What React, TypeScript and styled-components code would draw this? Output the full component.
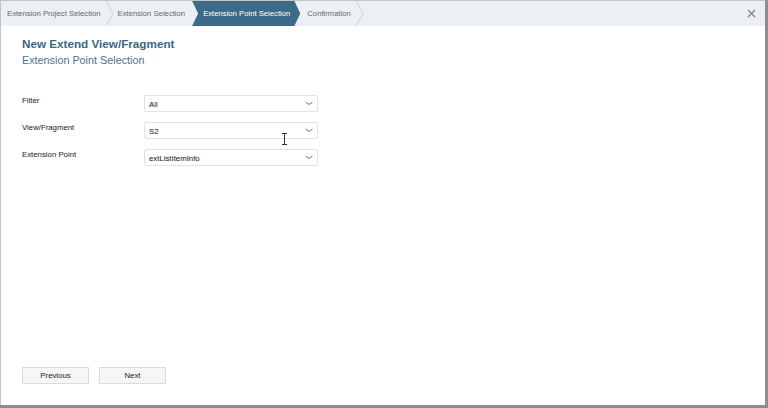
import React from "react";
import styled, { createGlobalStyle } from "styled-components";

const GlobalStyle = createGlobalStyle`
  html, body {
    margin: 0;
    padding: 0;
    background: #8e8e8e;
  }
  body {
    font-family: "Liberation Sans", Arial, Helvetica, sans-serif;
  }
`;

const steps = [
  { label: "Extension Project Selection", active: false },
  { label: "Extension Selection", active: false },
  { label: "Extension Point Selection", active: true },
  { label: "Confirmation", active: false },
];

const fields = [
  { label: "Filter", value: "All" },
  { label: "View/Fragment", value: "S2" },
  { label: "Extension Point", value: "extListItemInfo" },
];

function Chevron() {
  return (
    <Sep width="10" height="25" viewBox="0 0 10 25">
      <polyline points="1,0 8,12.5 1,25" fill="none" stroke="#cfd3d8" strokeWidth="1" />
    </Sep>
  );
}

function CaretDown() {
  return (
    <svg width="8" height="5" viewBox="0 0 8 5">
      <polyline points="0.5,1 4,3.5 7.5,1" fill="none" stroke="#777" strokeWidth="1" />
    </svg>
  );
}

export default function App() {
  return (
    <>
      <GlobalStyle />
      <Page>
        <Dialog>
          <Header>
            <Steps>
              {steps.map((s, i) =>
                s.active ? (
                  <ActiveStep key={s.label}>{s.label}</ActiveStep>
                ) : (
                  <React.Fragment key={s.label}>
                    <Step first={i === 0}>{s.label}</Step>
                    {steps[i + 1]?.active ? null : <Chevron />}
                  </React.Fragment>
                )
              )}
            </Steps>
            <CloseButton aria-label="close">
              <svg width="9" height="9" viewBox="0 0 9 9">
                <path d="M1 1 L8 8 M8 1 L1 8" stroke="#808080" strokeWidth="1.2" />
              </svg>
            </CloseButton>
          </Header>
          <Body>
            <Title>New Extend View/Fragment</Title>
            <Subtitle>Extension Point Selection</Subtitle>
            <Form>
              {fields.map((f) => (
                <Row key={f.label}>
                  <Label>{f.label}</Label>
                  <Select>
                    <span>{f.value}</span>
                    <CaretDown />
                  </Select>
                </Row>
              ))}
              <Cursor width="7" height="12" viewBox="0 0 7 12">
                <path d="M1 0.5 H6 M3.5 0.5 V11.5 M1 11.5 H6" stroke="#333" strokeWidth="1" fill="none" />
              </Cursor>
            </Form>
            <Spacer />
            <Buttons>
              <Button>Previous</Button>
              <Button>Next</Button>
            </Buttons>
          </Body>
        </Dialog>
      </Page>
    </>
  );
}

const Page = styled.div`
  width: 768px;
  height: 408px;
  overflow: hidden;
`;

const Dialog = styled.div`
  width: 764px;
  height: 404px;
  background: #ffffff;
  border-top: 1px solid #c4c4c4;
  border-left: 1px solid #c4c4c4;
  display: flex;
  flex-direction: column;
`;

const Header = styled.div`
  height: 25px;
  background: #eceff3;
  display: flex;
  align-items: center;
  justify-content: space-between;
  flex-shrink: 0;
`;

const Steps = styled.div`
  display: flex;
  align-items: center;
  height: 100%;
`;

const Step = styled.div<{ first?: boolean }>`
  font-size: 7.7px;
  color: #666a70;
  padding-left: ${(p) => (p.first ? "6px" : "3px")};
  padding-right: 4px;
  white-space: nowrap;
  line-height: 25px;
`;

const Sep = styled.svg`
  display: block;
  flex-shrink: 0;
`;

const ActiveStep = styled.div`
  height: 25px;
  line-height: 25px;
  background: #3d6b87;
  color: #ffffff;
  font-size: 7.7px;
  white-space: nowrap;
  padding: 0 10px 0 11px;
  margin-left: 3px;
  margin-right: 4px;
  clip-path: polygon(0 0, calc(100% - 6px) 0, 100% 50%, calc(100% - 6px) 100%, 0 100%, 6px 50%);
`;

const CloseButton = styled.div`
  width: 9px;
  height: 9px;
  margin-right: 9px;
  display: flex;
`;

const Body = styled.div`
  flex: 1;
  display: flex;
  flex-direction: column;
  padding: 11px 0 21px 21px;
`;

const Title = styled.div`
  font-size: 11.7px;
  font-weight: bold;
  color: #3c6784;
  line-height: 14px;
`;

const Subtitle = styled.div`
  font-size: 10.8px;
  color: #4a7391;
  line-height: 14px;
  margin-top: 2px;
`;

const Form = styled.div`
  position: relative;
  display: flex;
  flex-direction: column;
  gap: 10px;
  margin-top: 28px;
`;

const Row = styled.div`
  display: flex;
  align-items: flex-start;
`;

const Label = styled.div`
  width: 122px;
  font-size: 7.8px;
  color: #222;
  line-height: 12px;
`;

const Select = styled.div`
  width: 164px;
  height: 15px;
  border: 1px solid #e2e2e2;
  border-radius: 2px;
  background: #fff;
  display: flex;
  align-items: center;
  justify-content: space-between;
  padding: 0 4px 0 4px;
  box-sizing: content-box;
  font-size: 7.8px;
  color: #111;
  & > span {
    padding-top: 1px;
  }
`;

const Cursor = styled.svg`
  position: absolute;
  left: 259px;
  top: 38px;
`;

const Spacer = styled.div`
  flex: 1;
`;

const Buttons = styled.div`
  display: flex;
  gap: 10px;
`;

const Button = styled.div`
  width: 65px;
  height: 15px;
  border: 1px solid #dcdcdc;
  background: #f6f6f6;
  font-size: 7.8px;
  color: #222;
  display: flex;
  align-items: center;
  justify-content: center;
`;
